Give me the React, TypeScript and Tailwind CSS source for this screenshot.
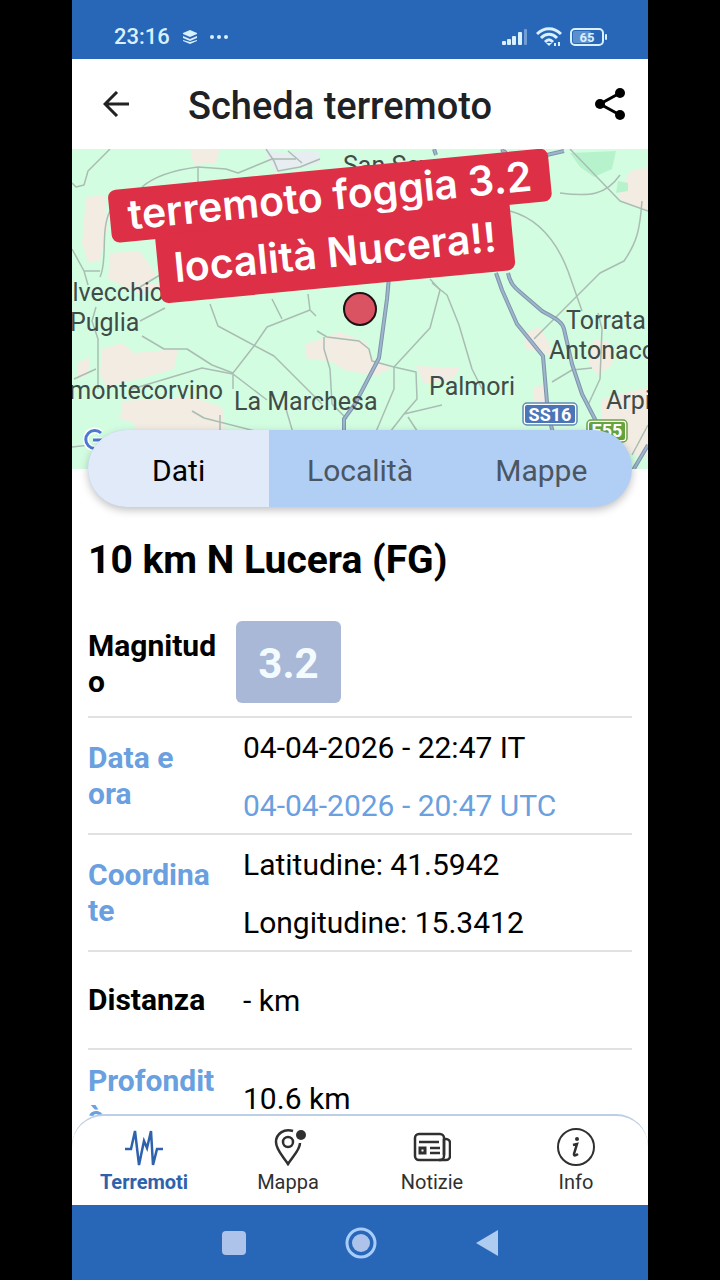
import type { ReactNode } from 'react'

const highways = [
  'M317 128l-2 22-8 59-24 46-11 15v13l-20 13',
  'M424 124l6 17 15 34 26 32 5 58 8 30',
  'M436 124c2 10 6 14 12 19l22 19c12 7 20 10 22 18l8 35 10 30 18 35',
  'M362 0l2 6M430 0l6 12M440 14l52-12M432 2l8 8',
  'M576 296l-16 27 6 14',
]

function MapView() {
  return (
    <svg className="block h-80 w-full bg-[#d3fde1]" viewBox="0 0 576 320" preserveAspectRatio="xMidYMid slice" role="img" aria-label="Mappa epicentro">
      {/* aree chiare */}
      <g fill="#f2ece3">
        <path d="M118 0h30l-4 14-22 2z" />
        <path d="M14 48l18-2 4 30-8 36-12 2-6-20z" />
        <path d="M38 104l30-2 16 24-8 8 20 2-26 10-34-16z" />
        <path d="M30 200l20-6 12 10 44-4-4 20-34 10-34 8-6-14z" />
        <path d="M50 252l70-4 30 10 6 42H66l-4-26-14-4z" />
        <path d="M6 214l12-6-2 18-10 4z" />
        <path d="M234 195l34-12 26 10 6 16 20 10-18 8-30-6-12-8-26-4z" />
        <path d="M344 217l44 2-8 12-28 4z" />
        <path d="M300 288l30-6 20 12h-50z" />
        <path d="M452 184l16-6 10 18 2 10-26-6z" />
        <path d="M462 238l14-4v26h-14z" />
        <path d="M522 190l16 4 4 20-16 12-10-12z" />
        <path d="M530 250l46-12v70l-24-4-22-24z" />
        <path d="M546 46l12-24 18-4v44l-24-8z" />
      </g>
      <g fill="#b6f3cd">
        <path d="M498 4l46-2-4 18-18 8-14-10z" />
        <path d="M546 32l10 2v8l-12 2z" />
      </g>
      <path d="M194 0l14 4 38-2 2 12-14 4-30 4-8-10z" fill="#e8edf2" />

      {/* strade secondarie */}
      <g fill="none" stroke="#a9bdb3" strokeWidth="1.500" strokeLinejoin="round">
        <path d="M38 0L28 10l-12 12-4 14-8 2-4-4" />
        <path d="M70 38c16-14 40-18 56-20l28 2 12 4 34-14 24 0" />
        <path d="M126 18v18M194 0l8 12 4 10 22-4 20-8M216 2l14 12" />
        <path d="M38 62c-10 20-2 50-10 66M28 122l-16 0-12-22M12 122l4 14" />
        <path d="M88 126l-20 12M93 159l-25 13" />
        <path d="M24 158l-4 14 6 18v50M24 220l-22 10" />
        <path d="M138 155l8 22 56 30 48 48M200 150l10 20M236 145l2 16 6 6" />
        <path d="M238 161l-43 17-13 19-21 27v16M60 240l70-21 31 6 34 26" />
        <path d="M70 187l22 13 23 0 25 16 21 8M120 262l12 7 63 16 30 9" />
        <path d="M148 266v28M245 182l10 6 32 4 10 8 3 12 22 6v22l-19 45" />
        <path d="M252 188v12l6 20 2 35 15 15M214 260l10 34" />
        <path d="M358 130l10 11-10 38-36 39 22 5 1 27-13 15 38-9M332 265l-14 18-22 10M336 268l17 26" />
        <path d="M360 134l15 12 12 30 13 44 10 20" />
        <path d="M438 62c30 8 48 34 58 60l14 40M462 190l66-66 24-12c14-20 16-34 18-60" />
        <path d="M498 0l50 52 28 10M548 26c-14 20-30 22-60 18" />
        <path d="M526 164l4 16-2 50-12 26M480 233l20-12 20-2M576 276l-16 30M0 298l18-2" />
      </g>

      {/* strade principali */}
      <g fill="none" stroke="#7d95ac" strokeWidth="4" strokeLinejoin="round">
        {highways.map((d) => <path key={d} d={d} />)}
      </g>
      <g fill="none" stroke="#9fb5cb" strokeWidth="2" strokeLinejoin="round">
        {highways.map((d) => <path key={d} d={d} />)}
      </g>

      <g fill="#414b48" fontFamily="Roboto, sans-serif" fontSize="25">
        <text x="271" y="25">San Severo</text>
        <text x="92" y="152" textAnchor="end">alvecchio</text>
        <text x="-2" y="182">Puglia</text>
        <text x="151" y="250" textAnchor="end">montecorvino</text>
        <text x="162" y="261">La Marchesa</text>
        <text x="357" y="246">Palmori</text>
        <text x="494" y="180">Torrata</text>
        <text x="477" y="210">Antonacci</text>
        <text x="534" y="260">Arpi</text>
      </g>

      <g fontFamily="Roboto, sans-serif" fontSize="18" fontWeight="700" fill="#fff" textAnchor="middle">
        <rect x="451" y="254" width="54" height="22" rx="4" fill="#fff" stroke="#5f8bb4" strokeWidth="1.500" />
        <rect x="453" y="256" width="50" height="18" rx="2" fill="#4a76b8" />
        <text x="478" y="272">SS16</text>
        <rect x="515" y="271" width="40" height="22" rx="4" fill="#fff" stroke="#69a446" strokeWidth="1.500" />
        <rect x="517" y="273" width="36" height="18" rx="2" fill="#67a33f" />
        <text x="535" y="288">E55</text>
      </g>

      <path d="M29 284a9 9 0 1 0 0 13M21 291h9" fill="none" stroke="#fff" strokeWidth="6" />
      <path d="M29 284a9 9 0 1 0 0 13M21 291h9" fill="none" stroke="#4a7bd0" strokeWidth="3" />

      <circle cx="288" cy="160" r="16" fill="#d95362" stroke="#1c1013" strokeWidth="2" />
    </svg>
  )
}

function Sticker() {
  return (
    <div className="absolute top-5 left-1/2 flex w-max -translate-x-[248px] -rotate-[5.5deg] flex-col items-center font-[Inter,sans-serif] text-[41px] leading-[53px] font-semibold text-white">
      <div className="rounded-lg bg-[#dd2f45] px-[18px]">terremoto foggia 3.2</div>
      <div className="-mt-1 rounded-b-lg bg-[#dd2f45] px-4 pt-2 pb-2">località Nucera!!</div>
    </div>
  )
}

function StatusBar() {
  return (
    <div className="flex h-[59px] shrink-0 items-center justify-between bg-[#2866b8] pt-[14px] pr-10 pl-[42px] text-[#d9f0ff]">
      <div className="flex items-center gap-3">
        <span className="text-[22px] leading-6 font-medium">23:16</span>
        <svg width="16" height="14" viewBox="0 0 16 14" fill="currentColor">
          <path d="M8 0l7 3v1L8 7 1 4V3z" />
          <path d="M1 6l7 3 7-3v2l-7 3-7-3z" />
          <path d="M1 10l7 2 7-2v1l-7 3-7-3z" />
        </svg>
        <svg width="18" height="4" viewBox="0 0 18 4" fill="currentColor">
          <circle cx="2" cy="2" r="2" />
          <circle cx="9" cy="2" r="2" />
          <circle cx="16" cy="2" r="2" />
        </svg>
      </div>
      <div className="flex items-center gap-2">
        <svg width="26" height="18" viewBox="0 0 26 18" fill="currentColor">
          <rect x="0" y="13" width="4" height="4" rx="1" />
          <rect x="5" y="11" width="4" height="6" rx="1" />
          <rect x="10" y="8" width="4" height="9" rx="1" />
          <rect x="16" y="4" width="4" height="13" rx="1" />
          <rect x="22" y="1" width="3" height="16" rx="1" opacity=".4" />
        </svg>
        <svg width="26" height="20" viewBox="0 0 26 20" fill="none" stroke="currentColor" strokeWidth="3">
          <path d="M1 7c7-7 17-7 24 0M5 11c5-5 11-5 16 0M9 15c3-3 5-3 8 0" />
          <path d="M10 16l3 3 3-3z" fill="currentColor" stroke="none" />
          <path d="M19 16v3M23 15v4" strokeWidth="2" />
        </svg>
        <svg width="38" height="18" viewBox="0 0 38 18">
          <rect x="1" y="1" width="32" height="16" rx="4" fill="none" stroke="currentColor" strokeWidth="2" />
          <rect x="3" y="3" width="18" height="12" rx="2" fill="#5c8fce" />
          <rect x="35" y="6" width="2" height="6" rx="1" fill="currentColor" />
          <text x="17" y="14" textAnchor="middle" fontFamily="Roboto, sans-serif" fontSize="13" fontWeight="700" fill="currentColor">65</text>
        </svg>
      </div>
    </div>
  )
}

function Row({ label, blue, children }: { label: string; blue?: boolean; children: ReactNode }) {
  return (
    <tr className="border-b-2 border-[#dfe1e3] first:*:pt-[10px]">
      <th scope="row" className={`w-[148px] pr-[18px] text-left font-bold wrap-break-word ${blue ? 'text-[#6a9fe0]' : ''}`}>
        {label}
      </th>
      <td>{children}</td>
    </tr>
  )
}

const tabs = ['Dati', 'Località', 'Mappe']

const nav = [
  {
    label: 'Terremoti',
    icon: <path d="M0 21h6l4-18 4 34 5-24 3 7 4-17 2 34 4-16h6" stroke="#2f62ac" />,
  },
  {
    label: 'Mappa',
    icon: (
      <>
        <path d="M24 3C15 0 7 6 7 14c0 8 7 14 12 22 5-8 12-14 12-21" />
        <circle cx="19" cy="14" r="5" />
        <circle cx="32" cy="7" r="5" fill="#303030" stroke="none" />
      </>
    ),
  },
  {
    label: 'Notizie',
    icon: (
      <>
        <rect x="2" y="6" width="29" height="26" rx="4" />
        <path d="M31 11h2a4 4 0 0 1 4 4v13a4 4 0 0 1-4 4h-7M31 11v16M6 14h20M17 20h10M17 25h10" />
        <rect x="7" y="20" width="5" height="5" strokeWidth="3" />
      </>
    ),
  },
  {
    label: 'Info',
    icon: (
      <>
        <circle cx="19" cy="19" r="18" strokeWidth="2" />
        <circle cx="20" cy="11" r="2" fill="#303030" stroke="none" />
        <path d="M16 17l4-1-3 10c0 2 1 2 4 0" />
      </>
    ),
  },
]

export default function App() {
  return (
    <div className="h-screen bg-black px-[10%] font-[Roboto,sans-serif] text-black">
      <div className="flex h-full flex-col bg-white">
        <StatusBar />

        <header className="flex h-[90px] shrink-0 items-center pr-[22px] pl-[31px]">
          <button type="button" aria-label="Indietro">
            <svg width="27" height="26" viewBox="0 0 27 26" fill="none" stroke="#222" strokeWidth="3">
              <path d="M26 13H3M14 1L2 13l12 12" />
            </svg>
          </button>
          <h1 className="mt-1 ml-[58px] flex-1 text-[38px] leading-[46px] font-medium text-[#202124]">Scheda terremoto</h1>
          <button type="button" aria-label="Condividi">
            <svg width="32" height="34" viewBox="0 0 32 34">
              <path d="M26 6L6 17l20 11" fill="none" stroke="#000" strokeWidth="3" />
              <circle cx="26" cy="6" r="5" />
              <circle cx="6" cy="17" r="5" />
              <circle cx="26" cy="28" r="5" />
            </svg>
          </button>
        </header>

        <main className="min-h-0 flex-1 overflow-hidden">
          <div className="relative">
            <MapView />
            <Sticker />
          </div>

          <div className="relative mx-4 -mt-[39px] grid h-[77px] grid-cols-3 overflow-hidden rounded-full bg-[#b1cff4] text-[30px] shadow-[0_3px_8px_rgba(0,0,0,0.25)]">
            {tabs.map((t, i) => (
              <button key={t} type="button" className={`pt-[3px] ${i === 0 ? 'bg-[#e0eaf8] text-black' : 'text-[#4a5663]'}`}>
                {t}
              </button>
            ))}
          </div>

          <section className="px-4 pt-7">
            <h2 className="text-[39px] leading-[50px] font-bold">10 km N Lucera (FG)</h2>

            <table className="mt-4 w-full table-fixed border-collapse text-[30px] leading-9">
              <tbody>
                <Row label="Magnitudo">
                  <div className="mt-[10px] mb-[13px] flex h-[82px] w-[105px] items-center justify-center rounded-md bg-[#a9b8d6] pt-1 text-[42px] font-bold text-[#f4fbff]">
                    3.2
                  </div>
                </Row>
                <Row label="Data e ora" blue>
                  <div className="flex h-[115px] flex-col justify-center gap-[22px] pt-[2px] pl-[7px]">
                    <div>04-04-2026 - 22:47 IT</div>
                    <div className="text-[#6a9fe0]">04-04-2026 - 20:47 UTC</div>
                  </div>
                </Row>
                <Row label="Coordinate" blue>
                  <div className="flex h-[115px] flex-col justify-center gap-[22px] pt-[2px] pl-[7px]">
                    <div>Latitudine: 41.5942</div>
                    <div>Longitudine: 15.3412</div>
                  </div>
                </Row>
                <Row label="Distanza">
                  <div className="flex h-24 items-center pt-[2px] pl-[7px]">- km</div>
                </Row>
                <Row label="Profondità" blue>
                  <div className="flex h-[98px] items-center pl-[7px]">10.6 km</div>
                </Row>
              </tbody>
            </table>
          </section>
        </main>

        <nav className="relative -mt-8 grid h-[91px] shrink-0 grid-cols-4 rounded-t-[32px] border-t-2 border-[#bccfe6] bg-white">
          {nav.map((n, i) => (
            <a key={n.label} href="#" className={`flex flex-col items-center gap-[2px] pt-3 text-[20px] leading-7 ${i === 0 ? 'font-bold text-[#2f62ac]' : 'text-[#303030]'}`}>
              <svg width="38" height="38" viewBox="0 0 38 38" fill="none" stroke="#303030" strokeWidth="2.500">
                {n.icon}
              </svg>
              {n.label}
            </a>
          ))}
        </nav>

        {/* barra di sistema */}
        <div className="flex h-[75px] shrink-0 items-center justify-center gap-[99px] bg-[#2866b8]">
          <button type="button" aria-label="App recenti" className="size-6 rounded bg-[#aec3ea]" />
          <button type="button" aria-label="Home">
            <svg width="32" height="32" viewBox="0 0 32 32">
              <circle cx="16" cy="16" r="14" fill="none" stroke="#a8cdfb" strokeWidth="3" />
              <circle cx="16" cy="16" r="9" fill="#aec3ea" />
            </svg>
          </button>
          <button type="button" aria-label="Indietro">
            <svg width="22" height="26" viewBox="0 0 22 26" fill="#aecbf0">
              <path d="M0 13L22 0v26z" />
            </svg>
          </button>
        </div>
      </div>
    </div>
  )
}
